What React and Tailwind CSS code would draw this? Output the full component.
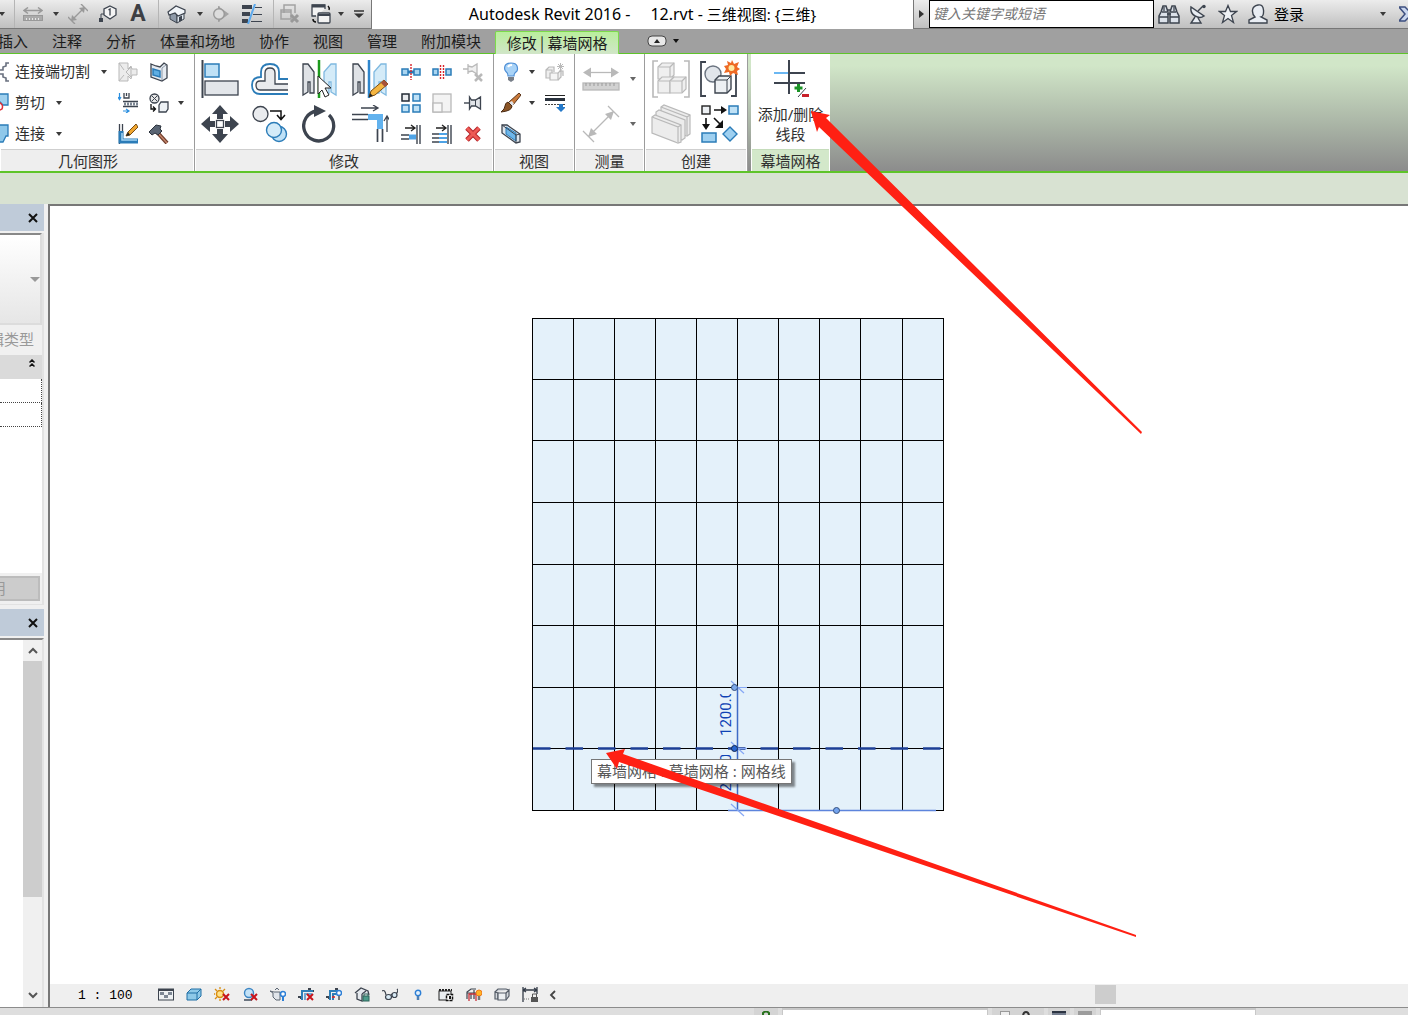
import React from "react";

const INK = "#3d444f";
const BLUE = "#2b7cb8";
const PALE = "#bfe1f6";
const MUTE = "#b9b9b9";

function Icon({ w, h, children }) {
  return (
    <svg width={w} height={h} viewBox={`0 0 ${w} ${h}`} fill="none" className="block shrink-0" aria-hidden="true">
      {children}
    </svg>
  );
}

function Caret({ color = "#3a3a3a" }) {
  return (
    <Icon w={6} h={4}>
      <path d="M0 0h6L3 4z" fill={color} />
    </Icon>
  );
}

function Btn({ label, className, children }) {
  return (
    <button type="button" aria-label={label} className={"flex shrink-0 items-center justify-center " + className}>
      {children}
    </button>
  );
}

/* ---------- title bar icons ---------- */
const RulerSmall = () => (
  <Icon w={20} h={14}>
    <path d="M2 3.500h16M5 .500l-4 3 4 3M15 .500l4 3-4 3" stroke="#999" strokeWidth="1.500" />
    <rect x=".500" y="8.500" width="19" height="5" fill="#aaa" stroke="#999" />
    <path d="M3.500 11v2M6.500 11v2M9.500 11v2M12.500 11v2M15.500 11v2" stroke="#e5e5e5" />
  </Icon>
);
const DimSmall = () => (
  <Icon w={20} h={20}>
    <path d="M4 16L16 4M0 13l7 7M13 0l7 7" stroke="#999" strokeWidth="1.400" />
    <path d="M3 17l1-6 5 5zM17 3l-1 6-5-5z" fill="#999" />
  </Icon>
);
const TagIcon = () => (
  <Icon w={20} h={18}>
    <path d="M12 1l6 3v6l-6 4-6-4V4z" fill="#f4f4f4" stroke={INK} strokeWidth="1.300" />
    <path d="M10.500 5l1.500-1v6.500" stroke={INK} strokeWidth="1.300" />
    <path d="M6 9H3v5" stroke={INK} />
    <rect x="1" y="13" width="4" height="4" fill={INK} />
  </Icon>
);
const HouseIcon = () => (
  <Icon w={20} h={20}>
    <path d="M3 8v7l7 4V10z" fill="#8d99a8" stroke={INK} />
    <path d="M10 10v9l7-4V8z" fill="#dfe7ef" stroke={INK} />
    <path d="M1 8l8-6 9 4v3l-7 3-3-3-6 2z" fill="#f1f5f9" stroke={INK} strokeWidth="1.200" />
    <path d="M12 13l3-1.500v5L12 18z" fill={INK} />
  </Icon>
);
const SectionIcon = () => (
  <Icon w={18} h={16}>
    <path d="M6 0l11 8-11 8z" fill="#a4a4a4" />
    <circle cx="7" cy="8" r="5.300" fill="#dcdcdc" stroke="#999" strokeWidth="1.400" />
    <path d="M7 0v3M7 13v3" stroke="#999" />
  </Icon>
);
const ThinLines = () => (
  <Icon w={20} h={20}>
    <path d="M0 3h10M0 10h8M0 17h6" stroke={INK} strokeWidth="4" />
    <path d="M13 3.500h7M11 10.500h9M9 17.500h11" stroke={INK} />
    <path d="M13 0L6 20" stroke="#5aa9ee" strokeWidth="2" />
  </Icon>
);
const CloseWin = () => (
  <Icon w={20} h={20}>
    <path d="M4 9V1h11v8M1 6h10v9H1zM1 8h10" stroke="#a2a2a2" strokeWidth="1.500" />
    <path d="M11 11l7 7M18 11l-7 7" stroke="#999" strokeWidth="3" />
  </Icon>
);
const SwitchWin = () => (
  <Icon w={20} h={20}>
    <path d="M5 12H1V1h13v4" fill="#f3f3f3" stroke={INK} strokeWidth="1.300" />
    <path d="M1 2h13" stroke={INK} strokeWidth="3" />
    <rect x="7" y="9" width="12" height="10" rx="1" fill="#f3f3f3" stroke={INK} strokeWidth="1.300" />
    <path d="M7 11h12" stroke={INK} strokeWidth="2" />
    <path d="M17 2q2 2 1 4M2 15q0 3 3 3" stroke="#111" strokeWidth="1.500" />
  </Icon>
);
const Binoculars = () => (
  <Icon w={22} h={20}>
    <path d="M3 8l2-6h3l2 6v11H1v-7zM19 8l-2-6h-3l-2 6v11h9v-7z" fill="#dce2ea" stroke={INK} strokeWidth="1.500" />
    <path d="M9 6h4M9 10h4M1 13h9M12 13h9M4 8h5M13 8h5M6 3v4M16 3v4" stroke={INK} strokeWidth="1.300" />
  </Icon>
);
const Dish = () => (
  <Icon w={18} h={20}>
    <path d="M2 3q-1 6 4 9t9 0z" fill="#e8edf3" stroke={INK} strokeWidth="1.500" />
    <path d="M9 7l5-5" stroke={INK} strokeWidth="1.400" />
    <circle cx="15" cy="2.500" r="1.700" fill={INK} />
    <path d="M6 13l-4 6h10l-3-5" fill="#e8edf3" stroke={INK} strokeWidth="1.400" />
  </Icon>
);
const StarIcon = () => (
  <Icon w={20} h={20}>
    <path d="M10 1.500l2.500 6h6l-5 4 2 7L10 14.500 4.500 18.500l2-7-5-4h6z" fill="#eef1f5" stroke={INK} strokeWidth="1.300" />
  </Icon>
);
const UserIcon = () => (
  <Icon w={20} h={20}>
    <path d="M1 19v-3l6-3q-3-3-2.500-7T10 1t5.500 5T13 13l6 3v3z" fill="#e9edf3" stroke={INK} strokeWidth="1.400" />
  </Icon>
);

/* ---------- ribbon: geometry ---------- */
const CopeIcon = () => (
  <Icon w={9} h={20}>
    <path d="M9 1H6v3L3 5v3h-3M9 19H6v-3l-3-1v-3H0" fill="#dfe3e8" stroke="#6b7280" strokeWidth="1.600" />
  </Icon>
);
const CutIcon = () => (
  <Icon w={9} h={20}>
    <path d="M-1 1h9v11H3L-1 8z" fill="#9fd0ee" stroke={BLUE} strokeWidth="1.300" />
    <path d="M-2 9q6 2 4 7l-4 2" fill="#fff" stroke="#e0303a" strokeWidth="1.500" />
  </Icon>
);
const JoinIcon = () => (
  <Icon w={9} h={20}>
    <path d="M-1 1h9v11H6l-3 6h-4z" fill="#8fc8ea" stroke={BLUE} strokeWidth="1.300" />
  </Icon>
);
const WallJoin = () => (
  <Icon w={20} h={20}>
    <path d="M1 1h9v6l3-3 1 3h5v6h-5l-1 4-3-3v5H1z" fill="#ececec" stroke={MUTE} />
    <path d="M1 1l5 7M1 19l5-6M8 10l5-5v10z" stroke={MUTE} />
  </Icon>
);
const SplitFace = () => (
  <Icon w={20} h={20}>
    <path d="M2 2l5 2 4 1 4-4 3 2v13l-5 3-11-4z" fill="#e6ebf1" stroke={INK} strokeWidth="1.300" />
    <path d="M13 6v12M13 6l4-3" stroke="#8d99a8" />
    <path d="M4 7l7 2v6l-7-2z" fill="#5eaee3" stroke={BLUE} strokeWidth="1.500" />
  </Icon>
);
const BeamJoin = () => (
  <Icon w={20} h={20}>
    <path d="M1.500 0v6M0 4l1.500 2.500L3 4M5 18h5M8 16l3 2-3 2" stroke="#2b8fe0" strokeWidth="1.200" />
    <path d="M6 0v5h5V0M8.500 0v3" stroke={INK} strokeWidth="1.300" />
    <path d="M5 8.500h15M5 13.500h15" stroke={INK} strokeWidth="1.500" />
    <path d="M6 11h14" stroke="#7d8794" strokeWidth="3" strokeDasharray="2 1" />
  </Icon>
);
const Demolish = () => (
  <Icon w={20} h={20}>
    <circle cx="5.500" cy="5.500" r="4.500" fill="#e8e8e8" stroke={INK} strokeWidth="1.300" />
    <path d="M3 3l5 5M8 3L3 8" stroke={INK} />
    <path d="M2 11v5h4M4 13.500L6.500 16 4 18.500" stroke="#111" strokeWidth="1.300" />
    <path d="M10 12l2-3h7v7l-2 3h-7z" fill="#edf1f5" stroke={INK} strokeWidth="1.300" />
  </Icon>
);
const CornerPencil = () => (
  <Icon w={20} h={20}>
    <path d="M1.500 0v20M4.500 0v12" stroke={INK} strokeWidth="1.300" />
    <path d="M3 7v10h17" stroke={BLUE} strokeWidth="5" />
    <path d="M4 9v7h15" stroke="#a5d4f2" strokeWidth="1.500" />
    <path d="M8 12l2-4 8-8 2 3-8 8z" fill="#f0a630" stroke="#7a4d12" />
    <path d="M8 12l2-4 2 3z" fill="#222" />
  </Icon>
);
const Hammer = () => (
  <Icon w={20} h={20}>
    <path d="M8 8l10 11" stroke="#6e3c2b" strokeWidth="4" />
    <path d="M8 8l10 11" stroke="#c5866c" strokeWidth="1.500" />
    <path d="M0 8l7-7 5 1-1 3 2 2-4 4-3-2-3 2z" fill="#596473" stroke="#2c333d" />
  </Icon>
);

/* ---------- ribbon: modify ---------- */
const AlignIcon = () => (
  <Icon w={38} h={38}>
    <path d="M1.500 0v38" stroke={INK} strokeWidth="2" />
    <rect x="4" y="4" width="14" height="13" fill="#bfe1f6" stroke={BLUE} strokeWidth="1.500" />
    <rect x="4" y="21" width="33" height="14" fill="#e3e6ea" stroke={INK} strokeWidth="1.300" />
  </Icon>
);
const OffsetIcon = () => (
  <Icon w={38} h={32}>
    <path d="M37 16h-9V9q0-8-9-8t-9 8v5q-9 0-9 8 0 9 8 9h28" stroke={BLUE} strokeWidth="1.800" />
    <path d="M37 21H24V10q0-5-5-5t-5 5v8H9q-4 0-4 4 0 5 4 5h28" fill="#e8eaed" stroke={INK} strokeWidth="1.300" />
  </Icon>
);
const MirrorPick = () => (
  <Icon w={38} h={38}>
    <path d="M2 4h5l6 8v21h-4V22H7v10l-5 3z" fill="#dfe2e6" stroke={INK} strokeWidth="1.300" />
    <path d="M35 4h-5l-7 8v21h5V22h2v10l5 3z" fill="#d4ebf8" stroke="#7fb9e0" strokeWidth="1.300" />
    <path d="M18 0v38" stroke="#1c9a1c" strokeWidth="2.500" />
    <path d="M17 16v18l4-4 3 7 4-2-4-7h6z" fill="#fff" stroke="#222" />
  </Icon>
);
const MirrorDraw = () => (
  <Icon w={38} h={38}>
    <path d="M2 4h5l6 8v21h-4V22H7v10l-5 3z" fill="#dfe2e6" stroke={INK} strokeWidth="1.300" />
    <path d="M35 4h-5l-7 8v21h5V22h2v10l5 3z" fill="#d4ebf8" stroke="#7fb9e0" strokeWidth="1.300" />
    <path d="M18 0v38" stroke="#2f86cc" strokeWidth="2.500" />
    <path d="M18 37l2-6 13-11 4 4-13 11z" fill="#f4b541" stroke="#7a4d12" />
    <path d="M33 20l4 4-3 3-4-4z" fill="#a6523a" />
    <path d="M18 37l1-4 3 3z" fill="#222" />
  </Icon>
);
const MoveIcon = () => (
  <Icon w={38} h={38}>
    <path
      d="M19 0l8 9h-5v5h-6V9h-5zM19 38l8-9h-5v-5h-6v5h-5zM0 19l9-8v5h5v6H9v5zM38 19l-9-8v5h-5v6h5v5z"
      fill={INK}
    />
    <rect x="15.500" y="15.500" width="7" height="7" fill="#fff" stroke={INK} strokeWidth="1.300" />
  </Icon>
);
const CopyIcon = () => (
  <Icon w={36} h={38}>
    <circle cx="8.500" cy="9" r="7.500" fill="#e9ebee" stroke={INK} strokeWidth="1.300" />
    <path d="M18 6h11v8M25 10l4 4.500 4-4.500" stroke="#111" strokeWidth="1.500" />
    <circle cx="27" cy="29" r="7.500" fill="#bfe1f6" stroke={BLUE} strokeWidth="1.400" />
    <circle cx="22" cy="25" r="7.500" fill="#d4ebf8" stroke={BLUE} strokeWidth="1.400" />
  </Icon>
);
const RotateIcon = () => (
  <Icon w={36} h={38}>
    <path d="M27 10a15 15 0 1 1-12-4" stroke={INK} strokeWidth="3.300" />
    <path d="M12 0l12 6-12 6z" fill={INK} />
  </Icon>
);
const TrimCorner = () => (
  <Icon w={38} h={38}>
    <path d="M1 9.500h16M1 14.500h16M26.500 24v13M31.500 24v13" stroke={INK} strokeWidth="1.700" />
    <path d="M17 12h12v12" stroke="#62b2ee" strokeWidth="6" />
    <path d="M10 3h16M22 0l5 3-5 3M36 27V12M33 16l3-5 3 5" stroke={INK} strokeWidth="1.300" />
  </Icon>
);
const SplitIcon = ({ gap }) => (
  <Icon w={20} h={16}>
    <rect x="1" y="5" width={gap ? 5 : 6} height="6" fill="#a9d5f1" stroke={BLUE} strokeWidth="1.500" />
    <rect x={gap ? 14 : 13} y="5" width={gap ? 5 : 6} height="6" fill="#a9d5f1" stroke={BLUE} strokeWidth="1.500" />
    {!gap && <path d="M7 8h6" stroke={BLUE} strokeWidth="3" />}
    <path d={gap ? "M8.500 1v14M11.500 1v14" : "M10 0v16"} stroke="#d8232a" strokeWidth="1.400" strokeDasharray="2 1" />
  </Icon>
);
const Unpin = () => (
  <Icon w={20} h={20}>
    <path d="M0 7h5M5 2v10M5 4l4 1 5-3v10l-5-3-4 1" fill="#f0f0f0" stroke={MUTE} strokeWidth="1.300" />
    <path d="M12 12l7 7M19 12l-7 7" stroke={MUTE} strokeWidth="2.500" />
  </Icon>
);
const ArrayIcon = () => (
  <Icon w={20} h={20}>
    <rect x="1" y="1" width="7" height="7" fill="#e9ebee" stroke="#222a35" strokeWidth="1.500" />
    <rect x="12" y="1" width="7" height="7" fill={PALE} stroke={BLUE} strokeWidth="1.500" />
    <rect x="1" y="12" width="7" height="7" fill={PALE} stroke={BLUE} strokeWidth="1.500" />
    <rect x="12" y="12" width="7" height="7" fill={PALE} stroke={BLUE} strokeWidth="1.500" />
  </Icon>
);
const ScaleIcon = () => (
  <Icon w={20} h={20}>
    <rect x="1" y="1" width="18" height="18" fill="#f3f3f3" stroke={MUTE} strokeWidth="1.300" />
    <rect x="1" y="10" width="9" height="9" fill="#f8f8f8" stroke={MUTE} strokeWidth="1.300" />
  </Icon>
);
const PinIcon = () => (
  <Icon w={18} h={16}>
    <path d="M0 8h5" stroke={INK} strokeWidth="1.400" />
    <path d="M5.500 2v12l2-3h4l5 3V2l-5 3h-4z" fill="#e1e4e8" stroke={INK} strokeWidth="1.300" />
    <path d="M11.500 5v6" stroke={INK} />
  </Icon>
);
const TrimOne = ({ multi }) => (
  <Icon w={20} h={20}>
    <path d="M4 4h9M10 1l4 3-4 3" stroke="#222" strokeWidth="1.300" />
    <path d="M16 1v19M19 1v19" stroke={INK} strokeWidth="1.400" />
    <path d={multi ? "M0 10h8M0 14h8M0 18h8" : "M0 11h8M0 15h8"} stroke={INK} strokeWidth="1.300" />
    <path d={multi ? "M7 10h8M7 14h8M7 18h8" : "M8 13h7"} stroke="#4ea3e6" strokeWidth={multi ? 2 : 5} />
  </Icon>
);
const DeleteIcon = () => (
  <Icon w={18} h={18}>
    <path d="M3 3l12 12M15 3L3 15" stroke="#b5242a" strokeWidth="5" />
    <path d="M3 3l12 12M15 3L3 15" stroke="#ee5a55" strokeWidth="3" />
  </Icon>
);

/* ---------- ribbon: view, measure, create ---------- */
const BulbIcon = () => (
  <Icon w={16} h={20}>
    <path d="M5 14q0-3-2.500-5Q1 7 2 4t6-3 6 3 0 5q-3 2-3 5z" fill="#a9d3f7" stroke="#4f8fd6" strokeWidth="1.200" />
    <path d="M5 5q1-2 4-2" stroke="#fff" strokeWidth="2" />
    <path d="M5 15h6v3l-3 2-3-2z" fill="#777e88" />
  </Icon>
);
const HideBox = () => (
  <Icon w={20} h={18}>
    <path d="M1 7l3-3h5v5M1 7h6v8H1zM13 10l3-3v7l-3 3M14 8h4v5" fill="#efefef" stroke={MUTE} strokeWidth="1.200" />
    <path d="M5 10h8v7H5z" fill="#f5f5f5" stroke={MUTE} strokeWidth="1.200" />
    <path d="M15.500 0v7M12 3.500h7M13 1l5 5M18 1l-5 5" stroke={MUTE} />
  </Icon>
);
const BrushIcon = () => (
  <Icon w={20} h={20}>
    <path d="M18 0l2 2-8 10-4-3z" fill="#c9793a" stroke="#5b3419" />
    <path d="M11 8l2 3-2 2-4-3z" fill="#dfe3e8" />
    <path d="M7 9l4 4q0 5-11 6 4-3 4-6t3-4z" fill="#8b5526" stroke="#4a2a12" />
  </Icon>
);
const LineWork = () => (
  <Icon w={20} h={20}>
    <path d="M0 2.500h20" stroke="#222" />
    <path d="M0 6.500h20" stroke="#2b333e" strokeWidth="3" />
    <path d="M0 11.500h20" stroke="#444" strokeDasharray="2 1" />
    <path d="M14 11h4v3h3l-5 5-5-5h3z" fill="#2479c9" />
  </Icon>
);
const SelBox = () => (
  <Icon w={20} h={20}>
    <path d="M1 1h5l13 9v8l-4 1L1 9z" fill="#dfe5ec" stroke={INK} strokeWidth="1.300" />
    <path d="M5 3l10 6v8L5 10z" fill="#6db6ea" stroke={BLUE} />
    <path d="M15 11l4-1M15 19v-8L1 1" stroke={INK} />
  </Icon>
);
const MeasureIcon = () => (
  <Icon w={38} h={24}>
    <path d="M4 5.500h30" stroke={MUTE} strokeWidth="1.300" />
    <path d="M1 5.500l8-5v10zM37 5.500l-8-5v10z" fill={MUTE} />
    <rect x="1" y="16" width="36" height="7" fill="#d2d2d2" stroke={MUTE} strokeWidth="1.300" />
    <path d="M4 19v-3M8 19v-3M12 19v-3M16 19v-3M20 19v-3M24 19v-3M28 19v-3M32 19v-3" stroke="#999" />
  </Icon>
);
const MeasureDiag = () => (
  <Icon w={38} h={38}>
    <path d="M7 31L31 7M1 26l11 11M26 1l11 11" stroke={MUTE} strokeWidth="1.300" />
    <path d="M6 32l3-9 6 6zM32 6l-3 9-6-6z" fill={MUTE} />
  </Icon>
);
const Cube = ({ x, y, s, fill, stroke }) => (
  <g transform={`translate(${x} ${y})`} fill={fill} stroke={stroke} strokeWidth="1.200">
    <path d={`M0 4l4-4h${s}l0 ${s}-4 4H0z`} />
    <path d={`M0 4h${s}v${s}M${s} 4l4-4`} />
  </g>
);
const GroupIcon = () => (
  <Icon w={38} h={38}>
    <path d="M6 1H1v36h5M32 1h5v36h-5" stroke={MUTE} strokeWidth="1.600" />
    <Cube x={6} y={3} s={12} fill="#efefef" stroke={MUTE} />
    <Cube x={6} y={17} s={12} fill="#efefef" stroke={MUTE} />
    <Cube x={18} y={17} s={12} fill="#efefef" stroke={MUTE} />
  </Icon>
);
const SimilarIcon = () => (
  <Icon w={40} h={38}>
    <path d="M6 2H1v34h5M31 36h5V14" stroke={INK} strokeWidth="1.800" />
    <circle cx="13" cy="14" r="8" fill="#e1e5ea" stroke="#6b7480" strokeWidth="1.400" />
    <path d="M15 20l4-4h12v13l-4 4H15z" fill="#edf0f3" stroke={INK} strokeWidth="1.400" />
    <path d="M15 20h12v13M27 20l4-4" stroke={INK} />
    <path d="M32 0l2 4 5-2-2 5 3 2-3 2 1 4-5-2-3 3-1-4-5 1 2-4-2-3 4-1-1-4 4 2z" fill="#ee6a24" />
    <circle cx="31.500" cy="8" r="3" fill="#ffe9a0" />
  </Icon>
);
const AssemblyIcon = () => (
  <Icon w={40} h={40}>
    <g fill="#ececec" stroke={MUTE} strokeWidth="1.200">
      <path d="M10 3l3-2 26 10v19l-3 2-26-10z" />
      <path d="M36 32V13L10 3M36 13l3-2" />
      <path d="M5 8l3-2 26 10v18l-3 2L5 26z" />
      <path d="M1 13l3-2 26 10v17l-3 1-26-10z" />
      <path d="M1 13l26 10v16M27 23l3-2" />
    </g>
  </Icon>
);
const PartsIcon = () => (
  <Icon w={38} h={38}>
    <rect x="1" y="1" width="8" height="8" fill="#edf0f3" stroke="#222" strokeWidth="1.400" />
    <rect x="28" y="1" width="9" height="8" fill={PALE} stroke={BLUE} strokeWidth="1.500" />
    <rect x="1" y="28" width="14" height="9" fill="#9fd0f0" stroke={BLUE} strokeWidth="1.500" />
    <path d="M29 22l7 7-7 7-7-7z" fill="#9fd0f0" stroke={BLUE} strokeWidth="1.400" />
    <path d="M13 5h9M5 13v8M13 13l6 6" stroke="#111" strokeWidth="1.600" />
    <path d="M20 1l6 4-6 4zM1 19l4 6 4-6zM22 15v8h-8z" fill="#111" />
  </Icon>
);
const GridSegIcon = () => (
  <Icon w={38} h={38}>
    <path d="M17 0v34M2 13h31M2 23h31" stroke={INK} strokeWidth="2" />
    <path d="M2 13h14" stroke="#6bb7f2" strokeWidth="2" />
    <path d="M26.500 24v8M22.500 28h8" stroke="#1b9427" strokeWidth="3" />
    <path d="M26 37l8-9" stroke={INK} />
    <path d="M30 35.500h7" stroke="#c8202a" strokeWidth="3" />
  </Icon>
);

/* ---------- view control bar icons ---------- */
const Red = () => <path d="M9 7l6 6M15 7l-6 6" stroke="#c8141c" strokeWidth="2" />;
const viewTools = [
  ["详细程度", <><rect x=".500" y="2" width="15" height="11" fill="#eef1f3" stroke={INK} /><path d="M0 3h16" stroke={INK} strokeWidth="2" /><path d="M2 5h4v3H2zM10 5h4v3h-4zM6 8h4v3H6z" fill="#7d8794" /></>],
  ["视觉样式", <path d="M1 6l4-4h10v7l-4 4H1zM1 6h10v7M11 6l4-4" fill="#8ec9e8" stroke="#1f6ea5" />],
  ["日光路径", <><circle cx="6" cy="7" r="3.500" fill="#ffe289" stroke="#d98e12" strokeWidth="1.500" /><path d="M6 0v2M6 12v2M0 7h1M1 2l2 2M11 2L9 4M1 12l2-2" stroke="#d98e12" strokeWidth="1.300" /><Red /></>],
  ["阴影", <><circle cx="7" cy="6" r="4.500" fill="#c3e2f7" stroke="#3c86c4" strokeWidth="1.400" /><path d="M2 13h8" stroke="#6b7480" strokeWidth="2" /><Red /></>],
  ["渲染", <><path d="M0 4l3 2v4l3 3h4V5H4zM5 3l2-2 2 2" fill="#e1e5ea" stroke="#5d6672" /><circle cx="13" cy="7" r="2.500" fill="#fff" stroke="#2d7fd6" strokeWidth="1.500" /><path d="M13 10v4" stroke="#2d7fd6" strokeWidth="2" /></>],
  ["裁剪视图", <><path d="M0 10h3v2M10 2h3M13 4h3" stroke={INK} strokeWidth="2" /><path d="M4 13V4h11" stroke="#2d7fb8" strokeWidth="2" /><path d="M7 13V7h7" stroke="#6fa8d4" strokeWidth="2" /><Red /></>],
  ["显示裁剪区域", <><path d="M0 10h3v2M9 2h3" stroke={INK} strokeWidth="2" /><path d="M4 13V4h8M7 13V7h3" stroke="#2d7fb8" strokeWidth="2" /><path d="M6 10h3" stroke="#d22" strokeWidth="1.500" /><circle cx="13" cy="6" r="2.500" fill="#fff" stroke="#2d7fd6" strokeWidth="1.500" /><path d="M13 9v4" stroke="#777" strokeWidth="2" /></>],
  ["锁定视图", <><path d="M1 6l6-5 7 3 1 4M3 6v6l5 2V7M8 7l4-3" fill="#e5e9ee" stroke={INK} strokeWidth="1.300" /><rect x="9" y="9" width="6" height="5" fill="#4b9b8a" stroke="#2c6258" /><path d="M10 9V7h4v2" stroke="#2c6258" /></>],
  ["临时隐藏", <><path d="M0 4q3-2 4 4M9 8l1-1M15 2q2 2-1 5" stroke={INK} strokeWidth="1.200" /><ellipse cx="6.500" cy="10" rx="3" ry="2.500" fill="#d9ebf6" stroke={INK} strokeWidth="1.200" /><ellipse cx="12.500" cy="8" rx="2.500" ry="2.500" fill="#d9ebf6" stroke={INK} strokeWidth="1.200" /></>],
  ["显示隐藏图元", <><circle cx="8" cy="6" r="2.700" fill="#e2f0fc" stroke="#2d7fd6" strokeWidth="1.400" /><path d="M8 9v4" stroke="#4c7fb5" strokeWidth="2.500" /></>],
  ["临时视图属性", <><rect x="1" y="4" width="12" height="9" fill="#e9edf0" stroke="#222" /><path d="M1 3h13" stroke="#222" strokeWidth="2" strokeDasharray="2 1" /><path d="M8.500 7.500h6v6h-6z" fill="#fff" stroke="#111" strokeWidth="1.500" strokeDasharray="3 1" /><path d="M11 9h2v3h-2z" fill="#111" /></>],
  ["分析模型", <><path d="M1 12V5l4-3h5M5 12V6h6M1 6h8M8 12V3" stroke={INK} strokeWidth="1.200" /><path d="M3 14V7h7v7" stroke="#c8323a" strokeWidth="1.300" /><circle cx="13" cy="6" r="3" fill="#ffb326" stroke="#ee7a1c" /><path d="M13 9v4" stroke="#777" strokeWidth="2.500" /></>],
  ["位移集", <><path d="M1 5l3-3h8l3 1M1 5v7h3V6zM12 6l3-3v6l-3 4" fill="#d5d9de" stroke="#555d68" strokeWidth="1.200" /><path d="M4 6h8v7H4z" fill="#eceff2" stroke="#555d68" strokeWidth="1.200" /></>],
  ["显示约束", <><path d="M1 0v15M15 0v7M1 3h14M4 1L1 3l3 2M12 1l3 2-3 2" stroke="#333b47" strokeWidth="1.300" /><path d="M2 12h6" stroke="#777" strokeDasharray="1 1" /><rect x="9" y="10" width="7" height="5" fill="#555" /><path d="M10.500 10V7h4v3" stroke="#555" /></>],
];

/* ---------- ribbon structure ---------- */
function Panel({ title, className, last, green, children }) {
  return (
    <section
      className={
        "flex shrink-0 flex-col bg-white " + (last ? "" : "border-r border-[#9c9c9c] ") + className
      }
    >
      <div className="flex h-24 pt-[2px]">{children}</div>
      <div
        className={
          "mx-px flex h-[22px] items-center justify-center border-t text-[15px] leading-5 " +
          (green ? "border-[#c5dcbb] bg-[#d3e8ca]" : "border-[#cfcfcf] bg-[#eeeeee]")
        }
      >
        {title}
      </div>
    </section>
  );
}

const tabs = ["插入", "注释", "分析", "体量和场地", "协作", "视图", "管理", "附加模块"];
const bigTools = [
  ["对齐", AlignIcon], ["偏移", OffsetIcon], ["镜像 - 拾取轴", MirrorPick], ["镜像 - 绘制轴", MirrorDraw],
  ["移动", MoveIcon], ["复制", CopyIcon], ["旋转", RotateIcon], ["修剪为角", TrimCorner],
];

function TitleBar() {
  const sep = "h-full w-px shrink-0 bg-[#b5b5b5]";
  return (
    <header className="flex h-[29px] shrink-0 bg-white text-[15px]">
      <div className="flex h-[29px] w-[372px] shrink-0 items-stretch border-r border-b border-[#777] bg-linear-to-b from-[#ececec] to-[#c0c0c0]">
        <Btn label="保存选项" className="w-[14px] pr-[10px]"><Caret /></Btn>
        <i className={sep} />
        <Btn label="测量" className="w-[35px]"><RulerSmall /></Btn>
        <Btn label="测量选项" className="w-3"><Caret /></Btn>
        <Btn label="对齐标注" className="w-[31px]"><DimSmall /></Btn>
        <Btn label="按类别标记" className="w-[30px]"><TagIcon /></Btn>
        <button type="button" className="w-[30px] shrink-0 font-['Roboto','Liberation_Sans',sans-serif] text-[23px] leading-7 font-bold text-[#3d3f44]">A</button>
        <i className={"ml-[5px] " + sep} />
        <Btn label="默认三维视图" className="w-[35px]"><HouseIcon /></Btn>
        <Btn label="三维视图选项" className="w-3"><Caret /></Btn>
        <Btn label="剖面" className="w-[30px]"><SectionIcon /></Btn>
        <Btn label="细线" className="w-[31px]"><ThinLines /></Btn>
        <i className={"ml-[6px] " + sep} />
        <Btn label="关闭隐藏窗口" className="w-8"><CloseWin /></Btn>
        <Btn label="切换窗口" className="w-[30px]"><SwitchWin /></Btn>
        <Btn label="窗口选项" className="w-[10px]"><Caret /></Btn>
        <Btn label="自定义快速访问工具栏" className="flex-1">
          <Icon w={10} h={8}><path d="M0 1h10" stroke="#333" strokeWidth="1.500" /><path d="M0 3.500h10L5 8z" fill="#333" /></Icon>
        </Btn>
      </div>
      <h1 className="flex min-w-0 flex-1 items-baseline justify-center overflow-hidden leading-7 whitespace-nowrap text-black">
        <span className="mr-5 text-base leading-7">Autodesk Revit 2016 -</span>
        <span className="mr-1 text-base leading-7">12.rvt -</span>
        <span>三维视图: {"{三维}"}</span>
      </h1>
      <div className="flex w-[495px] shrink-0 items-stretch overflow-hidden border-b border-l border-[#777] bg-linear-to-b from-[#ececec] to-[#c0c0c0]">
        <Btn label="折叠搜索" className="w-[15px]">
          <Icon w={5} h={8}><path d="M0 0l5 4-5 4z" fill="#333" /></Icon>
        </Btn>
        <input
          type="text"
          aria-label="搜索"
          placeholder="键入关键字或短语"
          className="w-[225px] shrink-0 border border-black bg-white px-[3px] pb-[2px] text-[14px] italic outline-none placeholder:text-[#777]"
        />
        <Btn label="查找" className="w-[29px]"><Binoculars /></Btn>
        <Btn label="通讯中心" className="w-[30px]"><Dish /></Btn>
        <Btn label="收藏夹" className="w-[30px]"><StarIcon /></Btn>
        <button type="button" className="flex flex-1 items-center pl-[5px] text-black">
          <UserIcon />
          <span className="ml-[6px] flex-1 text-left">登录</span>
          <Caret />
        </button>
        <Btn label="应用程序交换" className="w-[22px] justify-end pl-2">
          <Icon w={9} h={16}><path d="M0 1h6l7 7-7 7H0l6-7z" fill="#c9d6ee" stroke="#3d4f80" strokeWidth="1.500" /></Icon>
        </Btn>
      </div>
    </header>
  );
}

function Ribbon() {
  const cell = "h-[31px] w-[31px]";
  return (
    <div className="flex h-[119px] shrink-0 border-b-2 border-[#5ec429] bg-linear-to-b from-[#d1e6c8] from-10% via-[#aab5a6] via-60% to-[#8c8c8c]">
      <Panel title="几何图形" className="w-[195px] [&>div:last-child]:pr-[18px]">
        <div className="flex w-[112px] flex-col">
          {[["连接端切割", CopeIcon], ["剪切", CutIcon], ["连接", JoinIcon]].map(([t, I]) => (
            <button type="button" key={t} className="flex h-[31px] items-center text-[15px]">
              <I />
              <span className="mr-[11px] ml-[6px]">{t}</span>
              <Caret />
            </button>
          ))}
        </div>
        <div className="grid grid-cols-[31px_31px_14px] grid-rows-[31px_31px_31px]">
          <Btn label="墙连接" className={cell}><WallJoin /></Btn>
          <Btn label="拆分面" className={cell}><SplitFace /></Btn>
          <span />
          <Btn label="梁/柱连接" className={cell}><BeamJoin /></Btn>
          <Btn label="填色" className={cell}><Demolish /></Btn>
          <Btn label="填色选项" className="h-[31px]"><Caret /></Btn>
          <Btn label="编辑轮廓" className={cell}><CornerPencil /></Btn>
          <Btn label="拆除" className={cell}><Hammer /></Btn>
        </div>
      </Panel>
      <Panel title="修改" className="w-[299px]">
        <div className="grid grid-cols-[50px_50px_50px_50px] grid-rows-[45px_45px]">
          {bigTools.map(([t, I]) => (
            <Btn key={t} label={t} className="h-[46px] w-[50px]"><I /></Btn>
          ))}
        </div>
        <div className="grid grid-cols-[31px_31px_31px] grid-rows-[31px_31px_31px]">
          <Btn label="拆分图元" className={cell}><SplitIcon /></Btn>
          <Btn label="用间隙拆分" className={cell}><SplitIcon gap /></Btn>
          <Btn label="解锁" className={cell}><Unpin /></Btn>
          <Btn label="阵列" className={cell}><ArrayIcon /></Btn>
          <Btn label="缩放" className={cell}><ScaleIcon /></Btn>
          <Btn label="锁定" className={cell}><PinIcon /></Btn>
          <Btn label="修剪单个图元" className={cell}><TrimOne /></Btn>
          <Btn label="修剪多个图元" className={cell}><TrimOne multi /></Btn>
          <Btn label="删除" className={cell}><DeleteIcon /></Btn>
        </div>
      </Panel>
      <Panel title="视图" className="w-[81px]">
        <div className="grid grid-cols-[34px_8px_38px] grid-rows-[31px_31px_31px]">
          <Btn label="隐藏" className="h-[31px]"><BulbIcon /></Btn>
          <Btn label="隐藏选项" className="h-[31px]"><Caret /></Btn>
          <Btn label="置换图元" className="h-[31px]"><HideBox /></Btn>
          <Btn label="替换图形" className="h-[31px]"><BrushIcon /></Btn>
          <Btn label="替换选项" className="h-[31px]"><Caret /></Btn>
          <Btn label="线处理" className="h-[31px]"><LineWork /></Btn>
          <Btn label="选择框" className="h-[31px]"><SelBox /></Btn>
        </div>
      </Panel>
      <Panel title="测量" className="w-[70px]">
        <div className="grid grid-cols-[51px_14px] grid-rows-[45px_45px]">
          <Btn label="测量距离" className="h-[46px]"><MeasureIcon /></Btn>
          <Btn label="测量距离选项" className="h-[46px]"><Caret color="#666" /></Btn>
          <Btn label="对齐尺寸标注" className="h-[46px]"><MeasureDiag /></Btn>
          <Btn label="尺寸标注选项" className="h-[46px]"><Caret color="#666" /></Btn>
        </div>
      </Panel>
      <Panel title="创建" className="w-[103px]">
        <div className="grid grid-cols-[51px_47px] grid-rows-[45px_45px]">
          <Btn label="创建组" className="h-[46px]"><GroupIcon /></Btn>
          <Btn label="创建类似" className="h-[46px]"><SimilarIcon /></Btn>
          <Btn label="创建部件" className="h-[46px]"><AssemblyIcon /></Btn>
          <Btn label="创建零件" className="h-[46px]"><PartsIcon /></Btn>
        </div>
      </Panel>
      <Panel title="幕墙网格" className="ml-[3px] w-[79px]" last green>
        <button type="button" className="flex w-full flex-col items-center pt-1 text-[15px] leading-5 whitespace-nowrap">
          <GridSegIcon />
          <span className="mt-[6px]">添加/删除</span>
          <span>线段</span>
        </button>
      </Panel>
    </div>
  );
}

function PaletteHeader({ label }) {
  return (
    <div className="flex h-[27px] shrink-0 items-center justify-end bg-[#bfcbd9] pr-[6px]">
      <button type="button" aria-label={label}>
        <Icon w={10} h={10}><path d="M1 1l8 8M9 1L1 9" stroke="#111" strokeWidth="2" /></Icon>
      </button>
    </div>
  );
}

function Palettes() {
  return (
    <aside className="flex w-[48px] shrink-0 flex-col bg-[#f0f0f0] pr-1">
      <PaletteHeader label="关闭属性" />
      <section className="mt-[2px] flex min-h-0 flex-[369] flex-col border-r-2 border-b border-[#e2e2e2] text-[15px] text-[#999]">
        <button type="button" aria-label="类型选择器" className="flex h-[92px] shrink-0 items-center justify-end border-t-2 border-r-2 border-b-2 border-t-[#888] border-r-[#dcdcdc] border-b-[#dcdcdc] bg-linear-to-b from-white to-[#e6e6e6]">
          <Icon w={10} h={5}><path d="M0 0h10L5 5z" fill="#999" /></Icon>
        </button>
        <button type="button" disabled className="flex h-[30px] shrink-0 items-center justify-end overflow-hidden pr-2 pb-[2px] whitespace-nowrap">编辑类型</button>
        <button type="button" aria-label="折叠" className="flex h-[24px] shrink-0 items-start justify-end bg-[#dadada] pt-1 pr-[7px]">
          <Icon w={6} h={8}><path d="M.500 3.500L3 1l2.500 2.500M.500 7.500L3 5l2.500 2.500" stroke="#111" strokeWidth="1.500" /></Icon>
        </button>
        <div className="h-[24px] shrink-0 border-r border-b border-dotted border-[#444] bg-white" />
        <div className="h-[24px] shrink-0 border-r border-b border-dotted border-[#444] bg-white" />
        <div className="min-h-0 flex-1 bg-white" />
        <button type="button" disabled className="my-[3px] mr-[2px] flex h-[25px] shrink-0 items-center justify-end overflow-hidden border-2 border-l-0 border-[#bcbcbc] bg-[#cccccc] pr-8 whitespace-nowrap">应用</button>
      </section>
      <div className="mt-1"><PaletteHeader label="关闭项目浏览器" /></div>
      <section className="mt-[2px] flex min-h-0 flex-[365] justify-end border-t-2 border-r-2 border-t-[#888] border-r-[#e2e2e2] bg-white">
        <div className="flex w-[19px] flex-col items-center bg-[#f0f0f0]">
          <Btn label="向上滚动" className="h-[21px] w-full">
            <Icon w={10} h={7}><path d="M1 6l4-4 4 4" stroke="#555" strokeWidth="2" /></Icon>
          </Btn>
          <div className="w-full flex-[236] bg-[#cdcdcd]" />
          <div className="flex-[90]" />
          <Btn label="向下滚动" className="h-5 w-full pb-1">
            <Icon w={10} h={7}><path d="M1 1l4 4 4-4" stroke="#555" strokeWidth="2" /></Icon>
          </Btn>
        </div>
      </section>
    </aside>
  );
}

const xs = [532, 573, 614, 655, 696, 737, 778, 819, 860, 902, 943];
const ys = [318, 379, 440, 502, 564, 625, 687, 748, 810];

function Drawing() {
  return (
    <div className="relative min-h-0 flex-1 overflow-hidden bg-white">
      <svg className="absolute inset-0 h-full w-full" aria-label="幕墙三维视图">
        <defs>
          <clipPath id="dimTop"><rect x="715" y="694" width="22" height="50" /></clipPath>
          <clipPath id="dimLow"><rect x="715" y="755" width="22" height="40" /></clipPath>
        </defs>
        <g transform="translate(-50 -206)">
          <rect x="532" y="318" width="411" height="492" fill="#e4f1fa" />
          <g stroke="#000" strokeWidth="1" shapeRendering="crispEdges">
            {xs.map((x) => <line key={x} x1={x + 0.5} x2={x + 0.5} y1="318" y2="810" />)}
            {ys.map((y) => <line key={y} y1={y + 0.5} y2={y + 0.5} x1="532" x2="944" />)}
          </g>
          <path d="M533 748.500h411" stroke="#1c3f96" strokeWidth="2.500" strokeDasharray="17.500 15" />
          <path d="M737.500 687v123" stroke="#3f6bc6" strokeWidth="1.500" />
          <path d="M728 810.500h208" stroke="#5d84dc" strokeWidth="1.500" />
          <path d="M731 681l13 12M732 687.500h15M731 742l13 12M738 748.500h9M731 804l13 12" stroke="#86a8f5" strokeWidth="1.200" />
          <circle cx="734.500" cy="687.500" r="3" fill="#7aa7ea" stroke="#35507e" />
          <circle cx="734.500" cy="748.500" r="3" fill="#2865cf" stroke="#14284f" />
          <circle cx="836.500" cy="810.500" r="3" fill="#74a4ee" stroke="#35507e" />
          <g fill="#0f42b5" fontFamily="Roboto, sans-serif" fontSize="15">
            <g clipPath="url(#dimTop)"><text transform="translate(731 736) rotate(-90)">1200.0</text></g>
            <g clipPath="url(#dimLow)"><text transform="translate(731 800) rotate(-90)">1200.0</text></g>
          </g>
        </g>
      </svg>
      <div role="tooltip" className="absolute top-[553px] left-[541px] flex h-[25px] items-center border border-[#767676] bg-white px-[5px] pb-px text-[15px] leading-5 whitespace-pre text-[#575757] shadow-[3px_3px_2px_rgba(0,0,0,0.45)]">
        幕墙网格 : 幕墙网格 : 网格线
      </div>
    </div>
  );
}

function ViewBar() {
  return (
    <div className="flex h-[23px] shrink-0 items-stretch bg-[#efefef]">
      <button type="button" className="w-[102px] shrink-0 pl-7 text-left font-['Liberation_Mono',monospace] text-[13px] leading-[22px] whitespace-pre text-black">1 : 100</button>
      {viewTools.map(([t, art]) => (
        <Btn key={t} label={t} className="w-7 pb-[2px]"><Icon w={16} h={16}>{art}</Icon></Btn>
      ))}
      <Btn label="向左滚动" className="w-[21px] pr-[4px] pb-[2px]">
        <Icon w={7} h={10}><path d="M6 1L2 5l4 4" stroke="#444" strokeWidth="1.800" /></Icon>
      </Btn>
      <div className="mt-px flex flex-1 justify-end">
        <div className="mr-[292px] mb-[3px] w-[21px] bg-[#cdcdcd]" />
      </div>
    </div>
  );
}

function StatusBar() {
  return (
    <footer className="flex h-2 shrink-0 items-stretch overflow-hidden border-t border-[#8c8c8c] bg-[#dedede] pl-[754px]">
      <div className="flex w-6 shrink-0 justify-center bg-[#d4d4d4] pt-[3px]">
        <Icon w={8} h={6}><path d="M1 6V2q3-3 6 0v4" stroke="#27701c" strokeWidth="2" /></Icon>
      </div>
      <div className="ml-1 w-[206px] shrink-0 border-x border-t-2 border-[#c8c8c8] bg-white" />
      <div className="ml-1 flex w-[52px] shrink-0 items-start gap-3 bg-[#d4d4d4] pt-[3px] pl-2">
        <Icon w={10} h={6}><rect x=".500" y=".500" width="9" height="8" fill="#eee" stroke="#999" /></Icon>
        <Icon w={8} h={6}><path d="M1 6q0-5 3-5t3 5" stroke="#333" strokeWidth="2" /></Icon>
      </div>
      <div className="ml-1 w-[22px] shrink-0 bg-[#d4d4d4] px-1 pt-[3px]"><div className="h-1 border-t-2 border-[#2c3442] bg-[#727b8c]" /></div>
      <div className="ml-1 w-[22px] shrink-0 bg-[#d4d4d4] px-1 pt-[3px]"><div className="h-1 bg-[#9c9c9c]" /></div>
      <div className="ml-1 w-[156px] shrink-0 border-x border-t-2 border-[#c8c8c8] bg-white" />
    </footer>
  );
}

export default function App() {
  return (
    <div className="relative flex h-screen w-full flex-col overflow-hidden bg-[#f0f0f0] font-['Noto_Sans','Noto_Sans_CJK_SC',sans-serif] text-[#303030]">
      <TitleBar />
      <nav className="flex h-[25px] shrink-0 items-stretch border-b border-[#5ec429] bg-[#a0a0a0] text-[15px] leading-6 whitespace-nowrap text-[#1c1c1c]">
        <div className="-ml-[2px] flex gap-6">
          {tabs.map((t) => <button type="button" key={t}>{t}</button>)}
        </div>
        <button type="button" className="mt-[2px] -mb-px ml-[14px] w-[124px] rounded-t-xs border-x border-t border-[#7ddb4c] bg-linear-to-b from-[#b9ee9c] to-[#d1e6c8] font-['Noto_Sans_CJK_SC',sans-serif] leading-5">
          修改 | 幕墙网格
        </button>
        <button type="button" aria-label="最小化功能区" className="ml-7 flex items-center gap-[6px]">
          <Icon w={20} h={12}>
            <rect x="1" y="1" width="18" height="10" rx="4" fill="#e8e8e8" stroke="#444" />
            <path d="M10 4l3 4H7z" fill="#222" />
          </Icon>
          <Caret color="#111" />
        </button>
      </nav>
      <Ribbon />
      <div className="h-[31px] shrink-0 bg-[#d8e2d2]" />
      <div className="flex min-h-0 flex-1">
        <Palettes />
        <main className="flex min-w-0 flex-1 flex-col border-t-2 border-l-2 border-[#777]">
          <Drawing />
          <ViewBar />
        </main>
      </div>
      <StatusBar />
      <svg className="pointer-events-none absolute top-0 left-0 h-[1015px] w-[1408px]" aria-hidden="true">
        <path d="M811 111l19 4-4 3 316 314-1 2-322-307-2 5z" fill="#ff2013" />
        <path d="M606 753l19-4-2 5 513 181v2l-517-175-2 7z" fill="#ff2013" />
      </svg>
    </div>
  );
}
